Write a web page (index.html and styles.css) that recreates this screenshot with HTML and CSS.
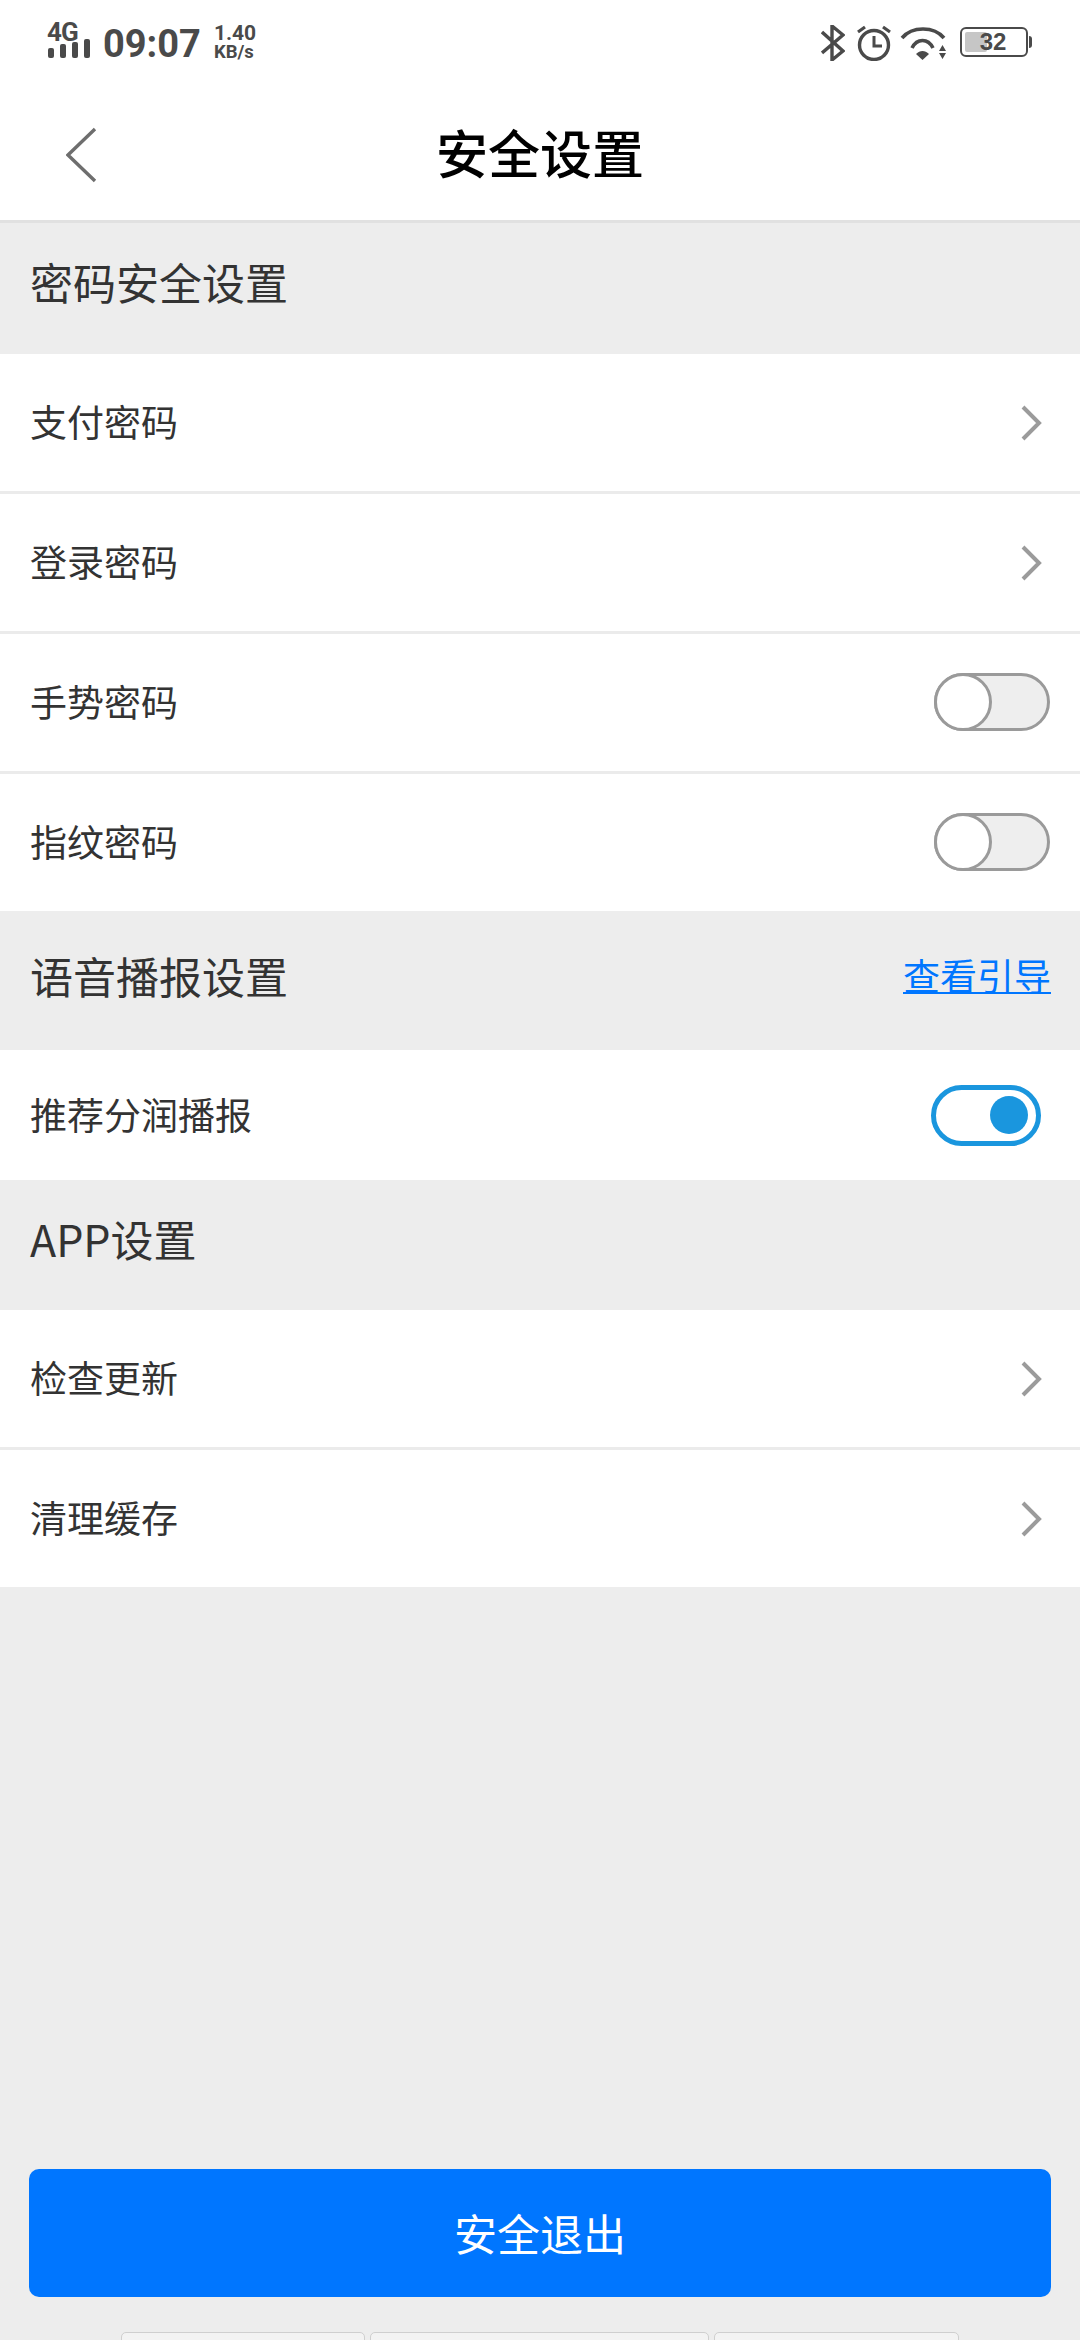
FILE: index.html
```html
<!DOCTYPE html>
<html lang="zh">
<head>
<meta charset="utf-8">
<title>安全设置</title>
<link rel="stylesheet" href="styles.css">
</head>
<body>
<div class="page">
  <div class="statusbar">
    <div class="status-left">
      <div class="signal">
        <span class="net">4G</span>
        <svg class="bars" width="42" height="19" viewBox="0 0 42 19"><g fill="#4a4a4a"><rect x="0" y="9" width="6" height="10" rx="2"/><rect x="12" y="5" width="6" height="14" rx="2"/><rect x="24" y="3" width="6" height="16" rx="2"/><rect x="36" y="0" width="6" height="19" rx="2"/></g></svg>
      </div>
      <span class="clock">09:07</span>
      <div class="speed"><span class="speed-num">1.40</span><span class="speed-unit">KB/s</span></div>
    </div>
    <div class="status-right">
      <svg width="24" height="36" viewBox="0 0 24 36"><path d="M1 7 L22 26 L11 35 V1 L22 10 L1 28" fill="none" stroke="#4a4a4a" stroke-width="3.4"/></svg>
      <svg class="ic-alarm" width="34" height="36" viewBox="0 0 34 36"><circle cx="17" cy="20" r="14.5" fill="none" stroke="#4a4a4a" stroke-width="3.4"/><path d="M17 11 V21 H25" fill="none" stroke="#4a4a4a" stroke-width="3"/><path d="M1 7 L8 2 M33 7 L26 2" stroke="#4a4a4a" stroke-width="3.2"/></svg>
      <svg class="ic-wifi" width="46" height="36" viewBox="0 0 46 36"><g fill="none" stroke="#4a4a4a" stroke-width="3.6"><path d="M2 13 C12 1 34 1 44 13"/><path d="M12 23 C17 13 28 13 33 23"/></g><path d="M16 29 C20 25 25 25 29 29 L22.500 35 Z" fill="#4a4a4a"/><path d="M39 26 H46 L42.500 20 Z M39 28 H46 L42.500 34 Z" fill="#4a4a4a"/></svg>
      <div class="battery"><div class="battery-body"><span class="battery-fill"></span><span class="battery-num">32</span></div><span class="battery-tip"></span></div>
    </div>
  </div>

  <header class="navbar">
    <svg class="back" width="32" height="56" viewBox="0 0 32 56"><path d="M29 2 L2 28 L29 54" fill="none" stroke="#6e6e6e" stroke-width="3.4"/></svg>
    <h1 class="title">安全设置</h1>
  </header>

  <div class="section s1"><span>密码安全设置</span></div>
  <div class="row line"><span>支付密码</span><svg class="chev" width="22" height="36" viewBox="0 0 22 36"><path d="M3 2 L19 18 L3 34" fill="none" stroke="#9b9b9b" stroke-width="4"/></svg></div>
  <div class="row line"><span>登录密码</span><svg class="chev" width="22" height="36" viewBox="0 0 22 36"><path d="M3 2 L19 18 L3 34" fill="none" stroke="#9b9b9b" stroke-width="4"/></svg></div>
  <div class="row line"><span>手势密码</span><div class="toggle"><div class="knob"></div></div></div>
  <div class="row"><span>指纹密码</span><div class="toggle"><div class="knob"></div></div></div>

  <div class="section s2"><span>语音播报设置</span><a class="link">查看引导</a></div>
  <div class="row short"><span>推荐分润播报</span><div class="switch-on"><div class="dot"></div></div></div>

  <div class="section s3"><span>APP设置</span></div>
  <div class="row line"><span>检查更新</span><svg class="chev" width="22" height="36" viewBox="0 0 22 36"><path d="M3 2 L19 18 L3 34" fill="none" stroke="#9b9b9b" stroke-width="4"/></svg></div>
  <div class="row"><span>清理缓存</span><svg class="chev" width="22" height="36" viewBox="0 0 22 36"><path d="M3 2 L19 18 L3 34" fill="none" stroke="#9b9b9b" stroke-width="4"/></svg></div>

  <div class="spacer"></div>
  <button class="logout">安全退出</button>
  <div class="tabs"><div class="tab t1"></div><div class="tab t2"></div><div class="tab t3"></div></div>
</div>
</body>
</html>
```
FILE: styles.css
```css
* { box-sizing: border-box; }
html, body { margin: 0; padding: 0; }
body { font-family: "Noto Sans CJK SC", "Roboto", sans-serif; color: #333; }
.page { width: 1080px; height: 2340px; display: flex; flex-direction: column; background: #ededed; overflow: hidden; }

.statusbar { height: 84px; flex: none; background: #fff; display: flex; justify-content: space-between; align-items: flex-start; padding: 20px 48px 0 48px; color: #4a4a4a; font-family: Roboto, sans-serif; font-weight: 700; }
.status-left { display: flex; align-items: flex-start; }
.signal { width: 43px; display: flex; flex-direction: column; margin-top: 2px; }
.net { font-size: 26px; line-height: 20px; letter-spacing: -1px; height: 17px; margin-left: -1px; }
.bars { display: block; }
.clock { font-size: 38px; line-height: 44px; margin-left: 12px; margin-top: 2px; }
.speed { display: flex; flex-direction: column; margin-left: 13px; margin-top: 3px; }
.speed-num { font-size: 21px; line-height: 20px; }
.speed-unit { font-size: 18.5px; line-height: 18px; }
.status-right { display: flex; align-items: center; margin-top: 5px; }
.ic-alarm { margin-left: 12px; }
.ic-wifi { margin-left: 9px; }
.battery { display: flex; align-items: center; margin-left: 14px; margin-bottom: 2px; }
.battery-body { position: relative; width: 68px; height: 30px; border: 2.5px solid #4a4a4a; border-radius: 6px; display: flex; align-items: center; justify-content: center; }
.battery-fill { position: absolute; left: 3px; top: 3px; bottom: 3px; width: 22px; background: #c6c6c6; border-radius: 2px; }
.battery-num { position: relative; font-family: "Liberation Sans", sans-serif; font-size: 24px; font-weight: 700; margin-left: -2px; }
.battery-tip { width: 3px; height: 12px; background: #4a4a4a; border-radius: 0 3px 3px 0; margin-left: 1px; }

.navbar { position: relative; flex: none; height: 139px; background: #fff; border-bottom: 3px solid #e1e1e1; display: flex; align-items: center; justify-content: center; }
.back { position: absolute; left: 66px; top: 43px; }
.title { margin: 0; font-size: 52px; font-weight: 500; color: #000; line-height: 72px; }

.section { flex: none; display: flex; justify-content: space-between; align-items: center; padding: 0 30px; font-size: 43px; color: #333; background: #ededed; }
.s1 { height: 131px; padding-bottom: 15px; }
.s2 { height: 139px; padding-bottom: 12px; }
.s3 { height: 130px; padding-bottom: 14px; }
.link { font-size: 37px; color: #0076ff; text-decoration: underline; text-decoration-thickness: 2px; text-underline-offset: 1px; margin-right: -1px; }

.row { flex: none; height: 137px; background: #fff; display: flex; justify-content: space-between; align-items: center; padding: 0 30px 3px; font-size: 37px; color: #333; }
.row.line { height: 140px; border-bottom: 3px solid #ebebeb; }
.row.short { height: 130px; }
.chev { margin-right: 8px; margin-top: 3px; }

.toggle { width: 116px; height: 58px; margin-top: 1px; border: 3px solid #9a9a9a; border-radius: 29px; background: #eeeeee; position: relative; }
.knob { position: absolute; left: -3px; top: -3px; width: 58px; height: 58px; background: #fff; border: 3px solid #9a9a9a; border-radius: 50%; }
.switch-on { width: 110px; height: 61px; margin-right: 9px; margin-top: 3px; border: 5px solid #1a96de; border-radius: 31px; display: flex; align-items: center; justify-content: flex-end; padding-right: 8px; background: #fff; }
.dot { width: 38px; height: 38px; background: #1a96de; border-radius: 50%; }

.spacer { flex: 1; }
.logout { flex: none; margin: 0 29px; width: 1022px; height: 128px; padding: 0 0 3px; background: #0076ff; border: 0; border-radius: 10px; color: #fff; font-family: "Noto Sans CJK SC", sans-serif; font-size: 43px; }
.tabs { flex: none; height: 8px; margin-top: 35px; padding-left: 121px; display: flex; gap: 5px; }
.tab { height: 20px; background: #f3f3f3; border: 1px solid #cfcfcf; border-radius: 5px 5px 0 0; }
.t1 { width: 244px; }
.t2 { width: 339px; }
.t3 { width: 245px; }
```
